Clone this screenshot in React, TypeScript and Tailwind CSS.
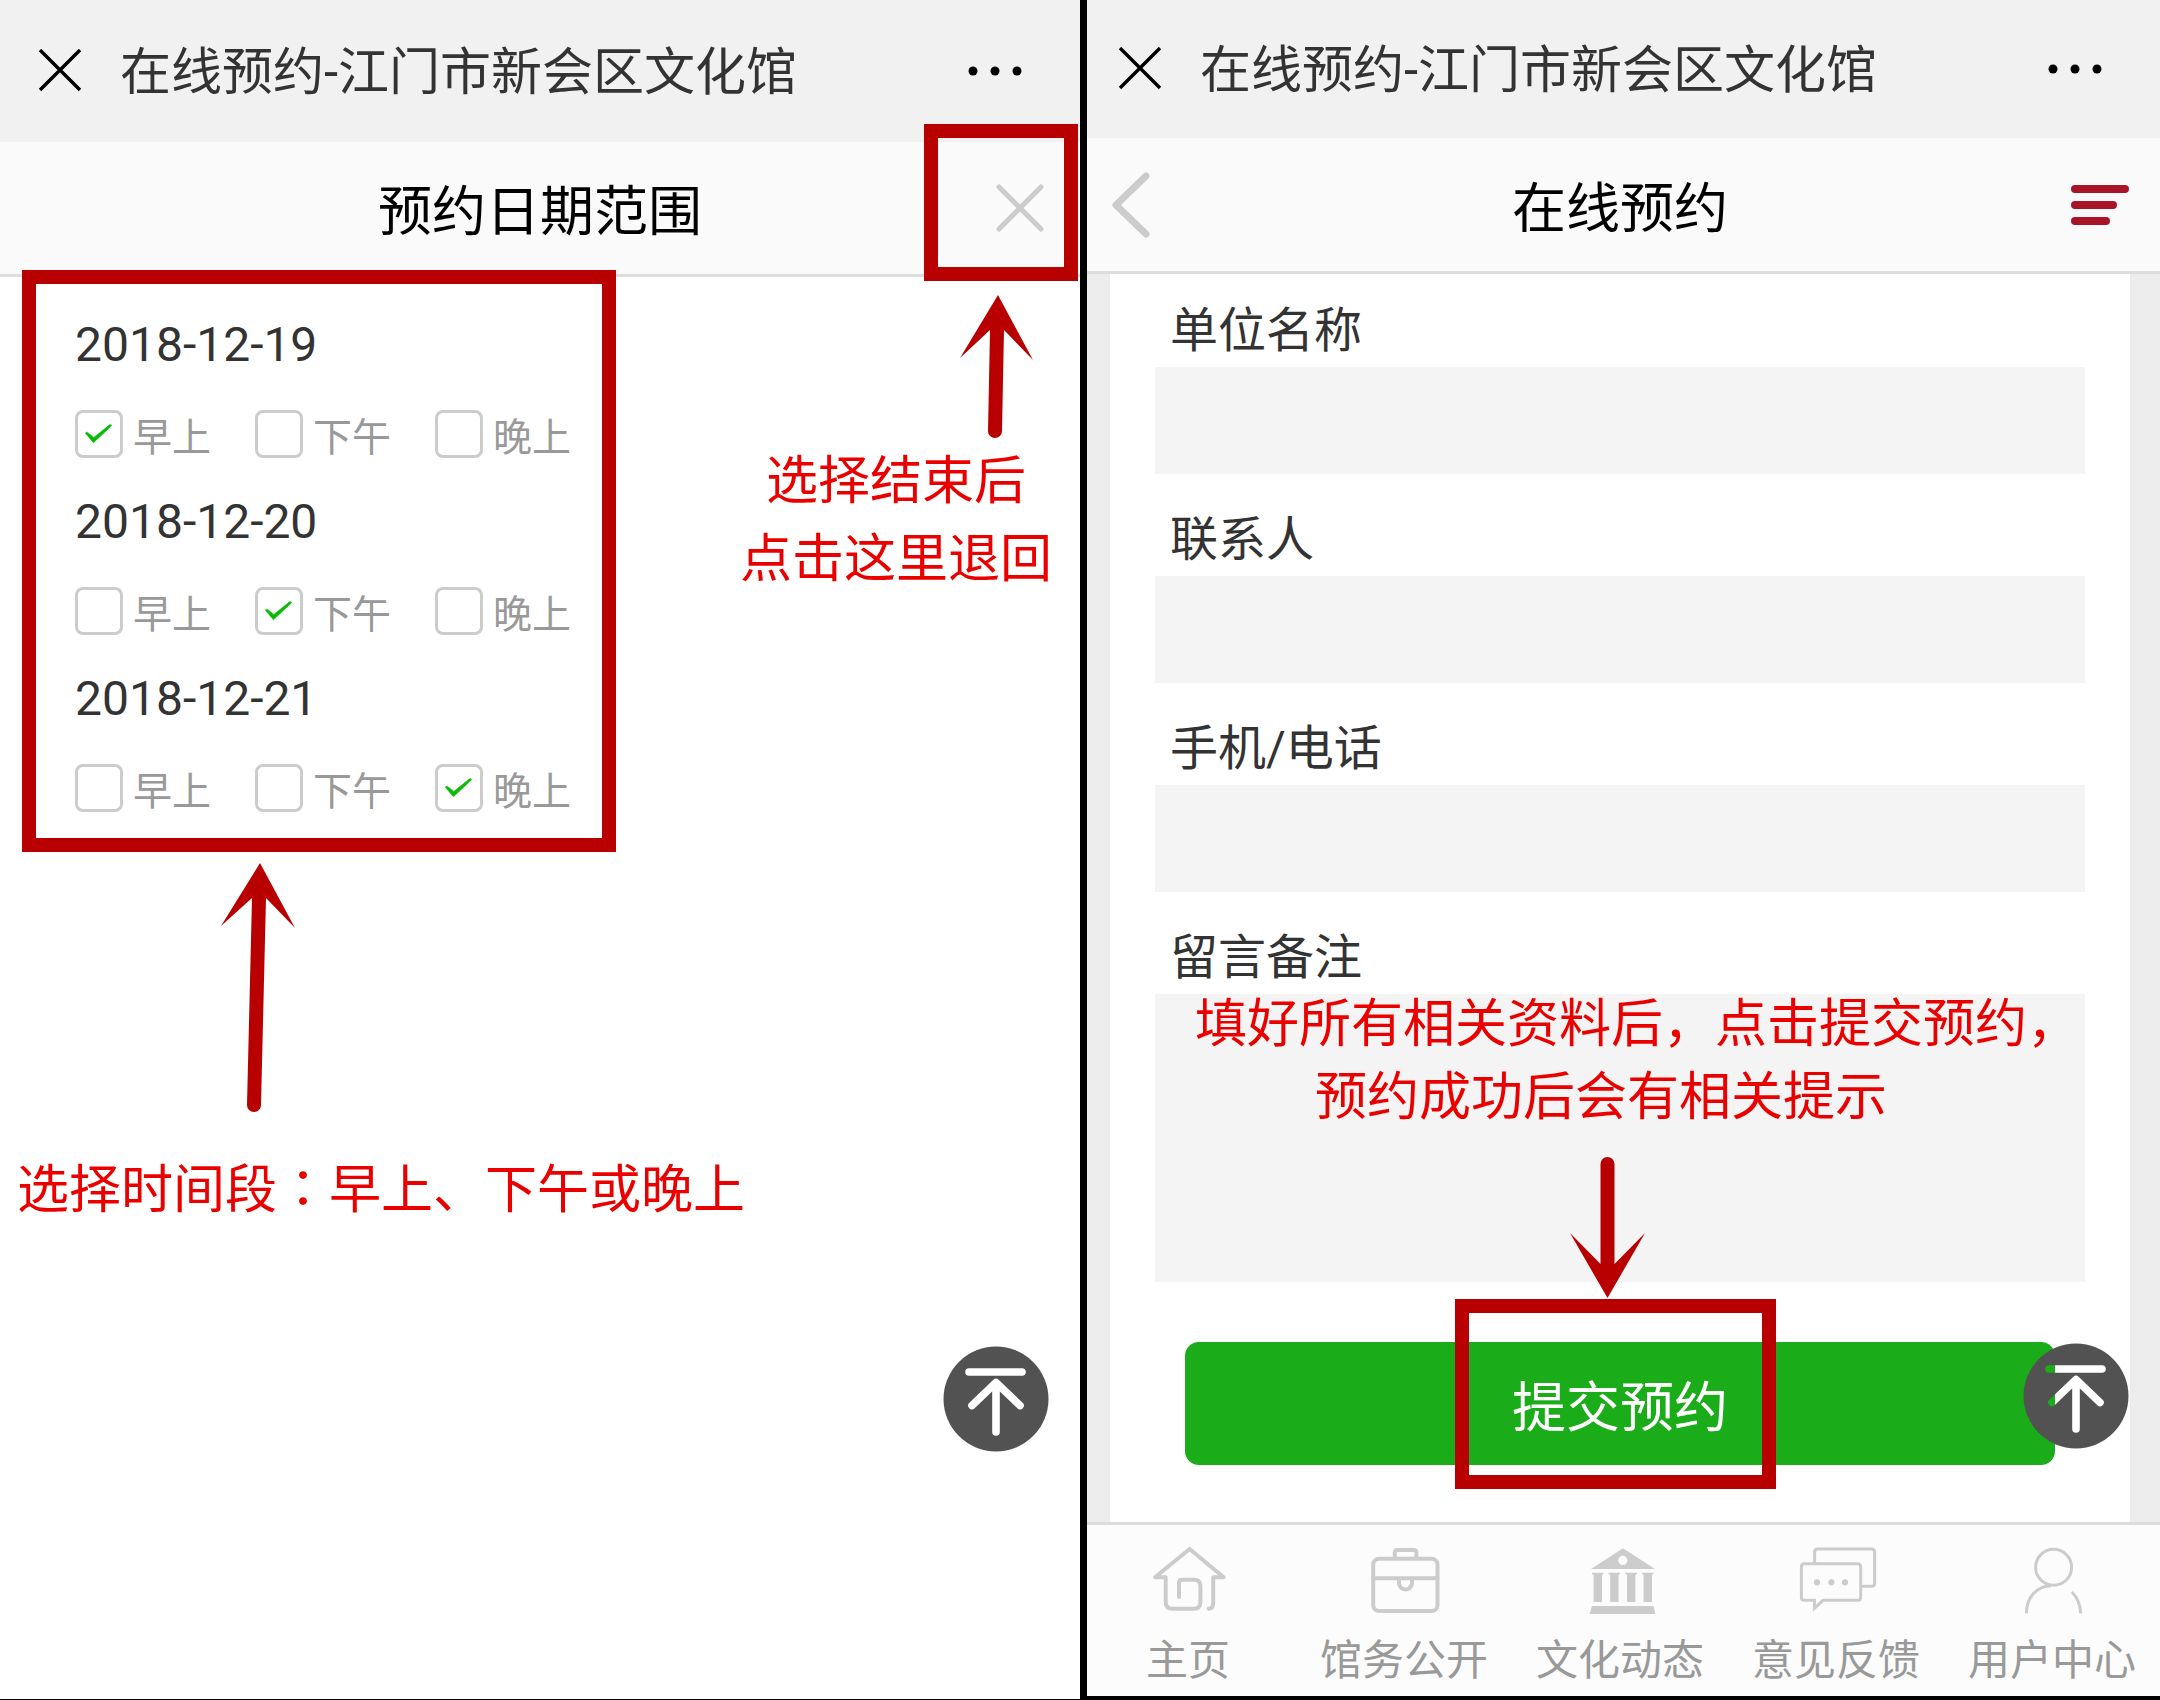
import { useState } from "react"
import type { ReactNode } from "react"

const slots = ["早上", "下午", "晚上"]

const days = [
    { date: "2018-12-19", picked: "早上" },
    { date: "2018-12-20", picked: "下午" },
    { date: "2018-12-21", picked: "晚上" },
]

const fields = [
    { id: "company", label: "单位名称" },
    { id: "contact", label: "联系人" },
    { id: "phone", label: "手机/电话" },
]

const TitleBar = ({ className }: { className: string }) => {
    return (
        <header className={`flex items-center bg-[#f1f1f1] pl-[38px] pr-[57px] ${className}`}>
            <button aria-label="关闭" className="cursor-pointer">
                <svg width="44" height="44" viewBox="0 0 44 44" stroke="#000000" strokeWidth="3.4">
                    <path d="M2 1L42 41M42 1L2 41" />
                </svg>
            </button>
            <h1 className="ml-[38px] flex-1 pt-1 text-[51px] leading-[72px] text-[#333333]">在线预约-江门市新会区文化馆</h1>
            <button aria-label="更多" className="cursor-pointer">
                <svg width="56" height="12" viewBox="0 0 56 12" fill="#000000">
                    <circle cx="6" cy="6" r="4.5" />
                    <circle cx="28" cy="6" r="4.5" />
                    <circle cx="50" cy="6" r="4.5" />
                </svg>
            </button>
        </header>
    )
}

const SlotCheckbox = ({ id, label, defaultChecked }: { id: string; label: string; defaultChecked: boolean }) => {
    const [checked, setChecked] = useState(defaultChecked)

    return (
        <div className="flex w-[180px] items-start">
            <span className="relative size-12">
                <input
                    id={id}
                    type="checkbox"
                    checked={checked}
                    onChange={() => setChecked(!checked)}
                    className="block size-12 cursor-pointer appearance-none rounded-lg border-[3px] border-[#cccccc] bg-white"
                />
                {checked && (
                    <svg className="pointer-events-none absolute inset-0" width="48" height="48" viewBox="0 0 48 48" fill="#09bb07" stroke="#09bb07" strokeWidth="0.6">
                        <path d="M10.4 23.2Q11.2 21.6 12.6 22.4L18.8 27.4L34.6 14.8Q36.6 14.2 36.4 16L18.4 32.8Z" />
                    </svg>
                )}
            </span>
            <label htmlFor={id} className="ml-[10px] cursor-pointer pt-2 text-[39px] leading-10 text-[#999999]">{label}</label>
        </div>
    )
}

// the arrow is cut out of the disc, so whatever lies below shows through
const BackToTop = ({ id, className }: { id: string; className: string }) => {
    return (
        <button aria-label="返回顶部" className={`absolute cursor-pointer ${className}`}>
            <svg width="106" height="106" viewBox="0 0 106 106">
                <mask id={id}>
                    <rect width="106" height="106" fill="#ffffff" />
                    <g stroke="#000000" strokeWidth="7.6" strokeLinecap="round" strokeLinejoin="round" fill="none">
                        <path d="M26 26H79" />
                        <path d="M53 86V37M29 59.5L53 36.5L77 59.5" />
                    </g>
                </mask>
                <circle cx="53" cy="53" r="52.5" fill="#525252" mask={`url(#${id})`} />
            </svg>
        </button>
    )
}

const Tab = ({ label, children }: { label: string; children: ReactNode }) => {
    return (
        <a href="#" className="flex flex-1 flex-col items-center pt-[18px] text-[42px] leading-[60px] text-[#999999]">
            <svg className="mb-3 overflow-visible" width="76" height="76" viewBox="0 0 76 76" fill="none" stroke="#cccccc" strokeLinecap="round" strokeLinejoin="round">
                {children}
            </svg>
            {label}
        </a>
    )
}

const DateRange = () => {
    return (
        <section className="relative flex-1 border-b border-black bg-white">
            <TitleBar className="h-[142px]" />
            <div className="relative flex h-[135px] items-center justify-center border-b-[3px] border-[#dddddd] bg-[#fafafa]">
                <h2 className="pt-[10px] text-[54px] leading-[72px] text-black">预约日期范围</h2>
                <button aria-label="返回" className="absolute right-[36px] cursor-pointer">
                    <svg width="48" height="48" viewBox="0 0 48 48" stroke="#cccccc" strokeWidth="5" strokeLinecap="round">
                        <path d="M3 3L45 45M45 3L3 45" />
                    </svg>
                </button>
            </div>

            <div className="flex flex-col gap-7 px-[75px] pt-8">
                {days.map((day) => (
                    <div key={day.date} className="flex flex-col gap-[29px]">
                        <h3 className="text-[48px] leading-[72px] text-[#333333]">{day.date}</h3>
                        <div className="flex">
                            {slots.map((slot) => (
                                <SlotCheckbox key={slot} id={`${day.date}-${slot}`} label={slot} defaultChecked={slot === day.picked} />
                            ))}
                        </div>
                    </div>
                ))}
            </div>

            <BackToTop id="top-left" className="right-[31px] top-[1346px]" />

            {/* notes over the page */}
            <div className="pointer-events-none absolute left-[22px] top-[270px] h-[582px] w-[594px] border-[14px] border-[#b90000]" />
            <div className="pointer-events-none absolute right-[2px] top-[124px] h-[157px] w-[154px] border-[14px] border-[#b90000]" />
            <svg className="absolute left-[960px] top-[294px]" width="76" height="146" viewBox="0 0 76 146" fill="#b90000">
                <path d="M38 1L73 66L44 36L42 137A7 7 0 0 1 28 137L30 36L0 64Z" />
            </svg>
            <svg className="absolute left-[220px] top-[862px]" width="76" height="252" viewBox="0 0 76 252" fill="#b90000">
                <path d="M40 1L75 66L46 36L41 243A7 7 0 0 1 27 243L32 36L1 64Z" />
            </svg>
            <p className="absolute right-[28px] top-[443px] text-center text-[52px] leading-[78px] text-[#eb0000]">
                选择结束后<br />点击这里退回
            </p>
            <p className="absolute left-[17px] top-[1147px] text-[52px] leading-[78px] text-[#eb0000]">
                选择时间段<span lang="zh-TW" className="font-['Noto_Sans_CJK_TC',sans-serif]">：</span>早上、下午或晚上
            </p>
        </section>
    )
}

const Booking = () => {
    return (
        <section className="relative flex flex-1 flex-col border-b-4 border-black bg-[#ededed]">
            <TitleBar className="h-[138px]" />
            <div className="relative flex h-[136px] items-center justify-center border-b-[3px] border-[#dddddd] bg-[#fafafa]">
                <button aria-label="返回" className="absolute left-[29px] cursor-pointer">
                    <svg width="42" height="68" viewBox="0 0 42 68" fill="none" stroke="#cccccc" strokeWidth="7" strokeLinecap="round" strokeLinejoin="round">
                        <path d="M37 5L7 34L37 63" />
                    </svg>
                </button>
                <h2 className="pt-[10px] text-[54px] leading-[72px] text-black">在线预约</h2>
                <button aria-label="菜单" className="absolute right-[30px] cursor-pointer">
                    <svg width="60" height="42" viewBox="0 0 60 42" stroke="#a91528" strokeWidth="8" strokeLinecap="round">
                        <path d="M5 5H55M5 21H43M5 37H36" />
                    </svg>
                </button>
            </div>

            <form className="mx-[30px] flex-1 bg-white px-[45px] pt-[21px]" onSubmit={(e) => e.preventDefault()}>
                {fields.map((field) => (
                    <div key={field.id} className="mb-[30px]">
                        <label htmlFor={field.id} className="block px-[15px] text-[48px] leading-[72px] text-[#333333]">{field.label}</label>
                        <input id={field.id} type="text" className="block h-[107px] w-full bg-[#f4f4f4] px-4 text-[42px] outline-none" />
                    </div>
                ))}
                <div className="mb-[60px]">
                    <label htmlFor="remark" className="block px-[15px] text-[48px] leading-[72px] text-[#333333]">留言备注</label>
                    <textarea id="remark" className="block h-[288px] w-full resize-none bg-[#f4f4f4] p-4 text-[42px] outline-none" />
                </div>
                <div className="px-[30px]">
                    <button type="submit" className="h-[123px] w-full cursor-pointer rounded-[14px] bg-[#1aad19] pt-[10px] text-[54px] leading-[72px] text-white">
                        提交预约
                    </button>
                </div>
            </form>

            <nav className="flex h-[174px] border-t-[3px] border-[#dddddd] bg-[#fcfcfc]">
                <Tab label="主页">
                    <path strokeWidth="4" d="M39.6 6L5 34.3H15.7V59Q15.7 65.7 22.4 65.7H43.7Q50.4 65.7 50.4 59V43Q50.4 36.7 44 36.7H32Q29 36.7 29 40V54M39.6 6L73.6 34.3H63.2V60Q63.2 65.7 58.6 65.7" />
                </Tab>
                <Tab label="馆务公开">
                    <rect strokeWidth="4" x="7.2" y="15.7" width="64.3" height="52.3" rx="6" />
                    <path strokeWidth="4" d="M7.2 35.3H71.5M28.8 15V9.5Q28.8 7 31.5 7H47.5Q50.4 7 50.4 9.5V15M33 36V40A6.5 6.5 0 0 0 46 40V36" />
                </Tab>
                <Tab label="文化动态">
                    <g fill="#cccccc" stroke="none">
                        <path fillRule="evenodd" d="M41 5.3L73 26H9ZM40.8 12.8A4.6 4.6 0 1 0 40.8 22A4.6 4.6 0 1 0 40.8 12.8Z" />
                        <path d="M10 29.7H21.4V31.4H20V59H11.6V31.4H10ZM26.6 29.7H38V31.4H36.6V59H28.2V31.4H26.6ZM43.4 29.7H54.8V31.4H53.4V59H45V31.4H43.4ZM60 29.7H71.4V31.4H70V59H61.6V31.4H60Z" />
                        <path d="M10 63H71.5L73.4 71H7.6Z" />
                    </g>
                </Tab>
                <Tab label="意见反馈">
                    <path strokeWidth="3" d="M16.6 20V9Q16.6 6 19.6 6H73.6Q76.6 6 76.6 9V40.3Q76.6 43.3 73.6 43.3H63.5" />
                    <path strokeWidth="3" strokeLinejoin="miter" d="M6.4 20.7H59.7Q62.7 20.7 62.7 23.7V54.3Q62.7 57.3 59.7 57.3H25L16.4 65.4V57.3H6.4Q3.4 57.3 3.4 54.3V23.7Q3.4 20.7 6.4 20.7Z" />
                    <g fill="#cccccc" stroke="none">
                        <circle cx="19" cy="39.3" r="3.1" />
                        <circle cx="33.4" cy="39.3" r="3.1" />
                        <circle cx="47" cy="39.3" r="3.1" />
                    </g>
                </Tab>
                <Tab label="用户中心">
                    <circle strokeWidth="3" cx="39.6" cy="24.3" r="18" />
                    <path strokeWidth="3" strokeLinecap="butt" d="M12.4 70.3C12.4 54 23 43 37 42.7M57.8 49Q66 57 66.7 70.3" />
                </Tab>
            </nav>

            <BackToTop id="top-right" className="right-[31px] top-[1343px]" />

            {/* notes over the page */}
            <div className="pointer-events-none absolute left-[375px] top-[1299px] h-[190px] w-[321px] border-[14px] border-[#b90000]" />
            <svg className="pointer-events-none absolute left-[490px] top-[1156px]" width="76" height="144" viewBox="0 0 76 144" fill="#b90000">
                <path d="M37.5 142L0 77L30.5 108V8A7 7 0 0 1 44.5 8V108L75 77Z" />
            </svg>
            <div className="pointer-events-none absolute left-[115px] top-[988px] whitespace-nowrap text-[52px] leading-[73px] text-[#eb0000]">
                <p>填好所有相关资料后，点击提交预约，</p>
                <p className="pl-[120px]">预约成功后会有相关提示</p>
            </div>
            {/* line between the two phones */}
            <div className="absolute inset-y-0 left-0 w-[7px] bg-black" />
        </section>
    )
}

const App = () => {
    return (
        <main lang="zh-CN" className="flex min-h-screen font-[Roboto,'Noto_Sans_CJK_SC',sans-serif]">
            <DateRange />
            <Booking />
        </main>
    )
}

export default App
